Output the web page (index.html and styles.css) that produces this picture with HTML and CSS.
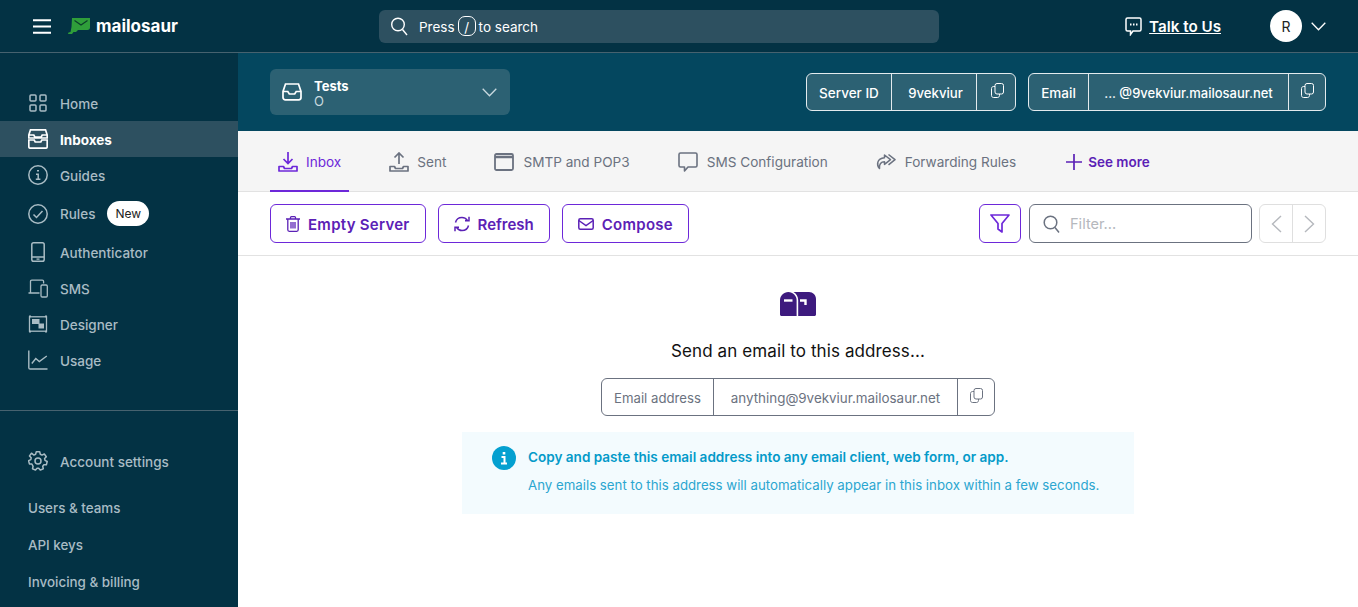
FILE: index.html
```html
<!DOCTYPE html>
<html lang="en">
<head>
  <meta charset="UTF-8">
  <title>Mailosaur</title>
  <link rel="stylesheet" href="styles.css">
</head>
<body>
  <header class="topbar">
    <svg class="burger" width="18" height="15" viewBox="0 0 18 15"><path d="M0 1.200h18M0 7.500h18M0 13.800h18" stroke="#fff" stroke-width="2" fill="none"/></svg>
    <div class="logo">
      <svg width="22" height="16" viewBox="0 0 22 16"><path d="M4 0h18v9.500c0 1.500-1 2.500-2.500 2.500H10L8 14H5.500L4 16H0l.5-1.500L2.500 14 3.500 9z" fill="#2f9e3a"/><path d="M6.500 2.500l6.500 4.500 6.500-4.500" stroke="#0b3f2a" stroke-width="1.200" fill="none"/></svg>
      <span class="logo-text">mailosaur</span>
    </div>
    <div class="search">
      <svg class="i" width="18" height="20" viewBox="0 0 18 20" fill="none" stroke="#fff" stroke-width="1.400"><circle cx="8" cy="8.500" r="6.300"/><path d="M12.500 13.500l4.500 5.500"/></svg>
      <span>Press</span><span class="kbd">/</span><span>to search</span>
    </div>
    <a class="talk">
      <svg width="17" height="19" viewBox="0 0 17 19" fill="none" stroke="#fff" stroke-width="1.500"><path d="M2.500 1h12c.8 0 1.500.7 1.500 1.500v10c0 .8-.7 1.500-1.500 1.500H8l-2.500 3.500V14h-3C1.700 14 1 13.300 1 12.500v-10C1 1.700 1.700 1 2.500 1z"/><path d="M5 7.500h1.500M8 7.500h1.500M11 7.500h1.500" stroke-width="1.800"/></svg>
      <span>Talk to Us</span>
    </a>
    <div class="avatar">R</div>
    <svg class="caret" width="15" height="9" viewBox="0 0 15 9" fill="none" stroke="#fff" stroke-width="1.300"><path d="M.7.800l6.800 7 6.800-7"/></svg>
  </header>

  <div class="layout">
    <aside class="sidebar">
      <nav class="nav">
        <a class="nav-item">
          <svg width="20" height="20" viewBox="0 0 20 20" fill="none" stroke="currentColor" stroke-width="1.500"><rect x="2" y="2" width="6" height="6" rx="1"/><rect x="12" y="2" width="6" height="6" rx="1"/><rect x="2" y="12" width="6" height="6" rx="1"/><rect x="12" y="12" width="6" height="6" rx="1"/></svg>
          Home
        </a>
        <a class="nav-item active">
          <svg width="20" height="20" viewBox="0 0 20 20" fill="none" stroke="currentColor" stroke-width="1.700"><path d="M2.500.8h15L19.200 6v3H.8V6zM.8 6h5l1 2h6.400l1-2h5"/><path d="M.8 11v6.500c0 1 .7 1.700 1.700 1.700h15c1 0 1.700-.7 1.700-1.700V11h-5.400l-1 2H7.200l-1-2z"/></svg>
          Inboxes
        </a>
        <a class="nav-item">
          <svg width="20" height="20" viewBox="0 0 20 20" fill="none" stroke="currentColor" stroke-width="1.500"><circle cx="10" cy="10" r="9.200"/><path d="M10 5v1.600" stroke-width="2"/><path d="M8 9.200h2.200v5M7.800 14.200h4.600" stroke-width="1.500"/></svg>
          Guides
        </a>
        <a class="nav-item rules">
          <svg width="20" height="20" viewBox="0 0 20 20" fill="none" stroke="currentColor" stroke-width="1.500"><circle cx="10" cy="10" r="9.200"/><path d="M5.500 10.500l3 3 6-6.500"/></svg>
          Rules
          <span class="badge">New</span>
        </a>
        <a class="nav-item">
          <svg width="20" height="20" viewBox="0 0 20 20" fill="none" stroke="currentColor" stroke-width="1.500"><rect x="3.800" y=".8" width="12.400" height="18.400" rx="1.800"/><path d="M3.800 15h12.400"/><path d="M8.500 17.100h3" stroke-width="1.300"/></svg>
          Authenticator
        </a>
        <a class="nav-item">
          <svg width="20" height="20" viewBox="0 0 20 20" fill="none" stroke="currentColor" stroke-width="1.300"><path d="M.5 15h11M2.500 15V3.500c0-.8.500-1.300 1.300-1.300h10.500c.8 0 1.300.5 1.300 1.300v2"/><rect x="13" y="7" width="6.300" height="12" rx="1.200"/></svg>
          SMS
        </a>
        <a class="nav-item">
          <svg width="20" height="20" viewBox="0 0 20 20" fill="none" stroke="currentColor" stroke-width="1.300"><rect x="1.500" y="2.800" width="17" height="14.400"/><path d="M1 2.300h2M17 2.300h2M1 17.700h2M17 17.700h2" stroke-width="1.800"/><rect x="4" y="5" width="7.500" height="5" fill="currentColor" stroke="none"/><rect x="10.500" y="9.500" width="5.500" height="5" fill="currentColor" stroke="none"/></svg>
          Designer
        </a>
        <a class="nav-item">
          <svg width="20" height="20" viewBox="0 0 20 20" fill="none" stroke="currentColor" stroke-width="1.400"><path d="M.8.500v17.200c0 .8.500 1.300 1.300 1.300h17.400"/><path d="M3.800 13.500l4-5 3.500 3 7.500-5.500"/></svg>
          Usage
        </a>
      </nav>
      <div class="divider"></div>
      <nav class="nav account">
        <a class="nav-item">
          <svg width="20" height="20" viewBox="0 0 20 20" fill="none" stroke="currentColor" stroke-width="1.500"><circle cx="10" cy="10" r="3"/><path d="M8.300.8h3.400l.6 2.500 1.700.8 2.300-1.100 2 2.700-1.700 1.900.4 1.800 2.200 1.100-.8 3.200-2.500.1-1.200 1.500.6 2.400-3 1.400-1.600-1.900h-1.600l-1.600 1.900-3-1.400.6-2.400L3.900 13l-2.500-.1-.8-3.200 2.200-1.100.4-1.800-1.700-1.900 2-2.700L5.900 4.100l1.700-.8z" stroke-linejoin="round"/></svg>
          Account settings
        </a>
        <a class="sub-item first">Users &amp; teams</a>
        <a class="sub-item">API keys</a>
        <a class="sub-item">Invoicing &amp; billing</a>
      </nav>
    </aside>

    <main class="main">
      <section class="server-bar">
        <div class="server-select">
          <svg width="20" height="18" viewBox="0 0 20 18" fill="none" stroke="#fff" stroke-width="1.700"><path d="M3.500 1h13L19 8.500V14.500c0 1.300-1 2.300-2.300 2.300H3.300C2 16.800 1 15.800 1 14.500V8.500zM1 8.500h4.800l1.500 2.500h5.400l1.500-2.500H19"/></svg>
          <div class="server-name">
            <strong>Tests</strong>
            <span>O</span>
          </div>
          <svg class="select-caret" width="15" height="9" viewBox="0 0 15 9" fill="none" stroke="#c9d9df" stroke-width="1.300"><path d="M.7.800l6.800 7 6.800-7"/></svg>
        </div>
        <div class="pill pill-server">
          <span class="seg seg-label">Server ID</span>
          <span class="seg seg-value">9vekviur</span>
          <span class="seg seg-copy"><svg width="13" height="15" viewBox="0 0 13 15" fill="none" stroke="#fff" stroke-width="1"><rect x="4" y=".5" width="8.500" height="10.500" rx="2"/><path d="M4 3.500H2.500c-1.100 0-2 .9-2 2v7c0 1.100.9 2 2 2h4c1.100 0 2-.9 2-2V11"/></svg></span>
        </div>
        <div class="pill pill-email">
          <span class="seg seg-label">Email</span>
          <span class="seg seg-value">... @9vekviur.mailosaur.net</span>
          <span class="seg seg-copy"><svg width="13" height="15" viewBox="0 0 13 15" fill="none" stroke="#fff" stroke-width="1"><rect x="4" y=".5" width="8.500" height="10.500" rx="2"/><path d="M4 3.500H2.500c-1.100 0-2 .9-2 2v7c0 1.100.9 2 2 2h4c1.100 0 2-.9 2-2V11"/></svg></span>
        </div>
      </section>

      <section class="tabs">
        <a class="tab active">
          <svg width="20" height="20" viewBox="0 0 20 20" fill="none" stroke="currentColor" stroke-width="1.700"><path d="M10 0v11M5.500 7l4.500 4.500L14.500 7"/><path d="M1 14.500h4.500l1 2h7l1-2H19v4.500H1z" stroke-linejoin="round"/></svg>
          Inbox
        </a>
        <a class="tab">
          <svg width="20" height="20" viewBox="0 0 20 20" fill="none" stroke="currentColor" stroke-width="1.700"><path d="M10 12V1M5.500 5.500L10 1l4.500 4.500"/><path d="M1 14.500h4.500l1 2h7l1-2H19v4.500H1z" stroke-linejoin="round"/></svg>
          Sent
        </a>
        <a class="tab">
          <svg width="20" height="18" viewBox="0 0 20 18" fill="none" stroke="currentColor" stroke-width="1.800"><rect x="1" y="1" width="18" height="16" rx="1.500"/><path d="M1 4h18" stroke-width="2.500"/></svg>
          SMTP and POP3
        </a>
        <a class="tab">
          <svg width="20" height="20" viewBox="0 0 20 20" fill="none" stroke="currentColor" stroke-width="1.600"><path d="M2.500 1h15c.8 0 1.500.7 1.500 1.500v11c0 .8-.7 1.500-1.500 1.500H10l-3.500 4v-4h-4C1.700 15 1 14.300 1 13.500v-11C1 1.700 1.700 1 2.500 1z" stroke-linejoin="round"/></svg>
          SMS Configuration
        </a>
        <a class="tab">
          <svg width="20" height="17" viewBox="0 0 20 17" fill="none" stroke="currentColor" stroke-width="1.500" stroke-linejoin="round"><path d="M8.500 2l6 4.700-6 4.700V8.800C5 8.800 3 11 3.500 15.500.5 12 .5 5.500 8.500 4.800z"/><path d="M12.500 1.500l6.500 5.200-6.500 5.200"/></svg>
          Forwarding Rules
        </a>
        <a class="tab more">
          <svg width="16" height="16" viewBox="0 0 16 16" fill="none" stroke="currentColor" stroke-width="1.700"><path d="M8 0v16M0 8h16"/></svg>
          See more
        </a>
      </section>

      <section class="toolbar">
        <button class="btn">
          <svg width="14" height="16" viewBox="0 0 14 16" fill="none" stroke="currentColor" stroke-width="1.300"><path d="M0 3h14M4.500 3V1.600c0-.5.400-.9.900-.9h3.200c.5 0 .9.400.9.900V3M1.800 3v10.800c0 .8.600 1.500 1.400 1.500h7.600c.8 0 1.400-.7 1.400-1.500V3M5 6v6.500M7 6v6.500M9 6v6.500"/></svg>
          Empty Server
        </button>
        <button class="btn btn-refresh">
          <svg width="16" height="16" viewBox="0 0 16 16" fill="none" stroke="currentColor" stroke-width="1.500"><path d="M1.500 6.500C2.200 3.500 4.800 1.500 8 1.500c2.200 0 4 1 5.300 2.800M15 .8v4h-4M14.500 9.500c-.7 3-3.300 5-6.500 5-2.200 0-4-1-5.300-2.800M1 15.200v-4h4"/></svg>
          Refresh
        </button>
        <button class="btn">
          <svg width="16" height="12" viewBox="0 0 16 12" fill="none" stroke="currentColor" stroke-width="1.500"><rect x=".8" y=".8" width="14.400" height="10.400" rx="1.500"/><path d="M.8 2.500L8 7.500l7.200-5"/></svg>
          Compose
        </button>
        <button class="btn-filter">
          <svg width="20" height="19" viewBox="0 0 20 19" fill="none" stroke="currentColor" stroke-width="1.700"><path d="M1 1h18l-7 8.500V18l-4-3V9.500z" stroke-linejoin="round"/></svg>
        </button>
        <div class="filter">
          <svg width="17" height="18" viewBox="0 0 17 18" fill="none" stroke="#6b7280" stroke-width="1.500"><circle cx="7.500" cy="7.500" r="6.300"/><path d="M12 12.500l4 5"/></svg>
          <span>Filter...</span>
        </div>
        <div class="pager">
          <span><svg width="11" height="18" viewBox="0 0 11 18" fill="none" stroke="#b5b8bd" stroke-width="1.400"><path d="M10 1L1.500 9l8.500 8"/></svg></span>
          <span><svg width="11" height="18" viewBox="0 0 11 18" fill="none" stroke="#b5b8bd" stroke-width="1.400"><path d="M1 1l8.500 8L1 17"/></svg></span>
        </div>
      </section>

      <section class="empty">
        <svg class="mailbox" width="36" height="24" viewBox="0 0 36 24"><path d="M8.300 0C3.700 0 0 3.700 0 8.300v14.200c0 .8.700 1.500 1.500 1.500h15.100V8.300C16.600 3.700 12.900 0 8.300 0z" fill="#3d1a7e"/><path d="M13.500 0c3 1.800 4.700 4.700 4.700 8.300V24h16.300c.8 0 1.500-.7 1.500-1.500V7c0-3.800-3.200-7-7-7z" fill="#3d1a7e"/><path d="M4 8.500h8.500" stroke="#fff" stroke-width="2.400"/><path d="M20 8.500h5.500V13" stroke="#fff" stroke-width="2.400" fill="none"/></svg>
        <h1 class="empty-title">Send an email to this address...</h1>
        <div class="address">
          <span class="addr-label">Email address</span>
          <span class="addr-value">anything@9vekviur.mailosaur.net</span>
          <span class="addr-copy"><svg width="13" height="15" viewBox="0 0 13 15" fill="none" stroke="#6b7280" stroke-width="1"><rect x="4" y=".5" width="8.500" height="10.500" rx="2"/><path d="M4 3.500H2.500c-1.100 0-2 .9-2 2v7c0 1.100.9 2 2 2h4c1.100 0 2-.9 2-2V11"/></svg></span>
        </div>
        <div class="info">
          <svg width="24" height="24" viewBox="0 0 24 24"><circle cx="12" cy="12" r="12" fill="#04a0d0"/><path d="M12 6v2.500" stroke="#fff" stroke-width="2.600"/><path d="M9.500 11h3v6.500M9 17.500h6" stroke="#fff" stroke-width="2" fill="none"/></svg>
          <div class="info-text">
            <strong>Copy and paste this email address into any email client, web form, or app.</strong>
            <p>Any emails sent to this address will automatically appear in this inbox within a few seconds.</p>
          </div>
        </div>
      </section>
    </main>
  </div>
</body>
</html>
```

FILE: styles.css
```css
* {
  box-sizing: border-box;
}
body {
  margin: 0;
  height: 607px;
  overflow: hidden;
  font-family: Inter, "Noto Sans", sans-serif;
  font-size: 14px;
  background-color: #fff;
  color: #111;
}
svg {
  flex: none;
  display: block;
}

/* top bar */
.topbar {
  height: 53px;
  display: flex;
  align-items: center;
  padding: 0 32px 0 33px;
  background-color: #033244;
  border-bottom: 1px solid #47626f;
  color: #fff;
}
.logo {
  display: flex;
  align-items: center;
  gap: 6px;
  margin-left: 17px;
  width: 311px;
}
.logo-text {
  font-size: 17px;
  font-weight: 700;
}
.search {
  width: 560px;
  height: 33px;
  display: flex;
  align-items: center;
  padding-left: 11px;
  border-radius: 6px;
  background-color: #2d5060;
  font-size: 13.5px;
}
.search .i {
  margin-right: 11px;
}
.search span {
  padding-top: 1px;
}
.kbd {
  width: 18px;
  height: 20px;
  margin: 0 3px;
  display: flex;
  align-items: center;
  justify-content: center;
  border: 1px solid #fff;
  border-radius: 7px;
}
.talk {
  margin-left: auto;
  display: flex;
  align-items: center;
  gap: 7px;
  font-size: 15.2px;
  font-weight: 600;
}
.talk span {
  text-decoration: underline;
}
.avatar {
  width: 32px;
  height: 32px;
  margin-left: 49px;
  display: flex;
  align-items: center;
  justify-content: center;
  border-radius: 50%;
  background-color: #fff;
  color: #222;
  font-size: 14px;
}
.caret {
  margin-left: 9px;
}

.layout {
  display: flex;
  height: 554px;
}

/* sidebar */
.sidebar {
  width: 238px;
  flex: none;
  padding-top: 32px;
  background-color: #033244;
  color: #a9bcc4;
}
.nav-item {
  height: 36px;
  display: flex;
  align-items: center;
  gap: 12px;
  padding: 1px 0 0 28px;
  font-size: 13.5px;
  font-weight: 500;
}
.nav-item svg {
  margin-top: -1px;
}
.nav-item.active {
  background-color: #2d5060;
  color: #fff;
  font-weight: 700;
}
.nav-item.rules {
  height: 41px;
}
.badge {
  padding: 0 8px;
  height: 25px;
  margin-top: -1px;
  display: flex;
  align-items: center;
  border-radius: 13px;
  background-color: #fff;
  color: #222;
  font-size: 12px;
  font-weight: 400;
}
.divider {
  height: 1px;
  margin-top: 32px;
  background-color: #47626f;
}
.account {
  padding-top: 32px;
}
.sub-item {
  height: 37px;
  display: flex;
  align-items: center;
  padding-left: 28px;
  font-size: 13.4px;
  font-weight: 500;
}
.sub-item.first {
  margin-top: 10px;
}

/* main */
.main {
  flex: 1;
  min-width: 0;
}
.server-bar {
  height: 78px;
  display: flex;
  align-items: center;
  padding: 0 32px;
  gap: 12px;
  background-color: #04475f;
}
.server-select {
  width: 240px;
  height: 46px;
  margin-right: auto;
  display: flex;
  align-items: center;
  gap: 12px;
  padding: 0 13px 0 12px;
  border-radius: 6px;
  background-color: #2c6173;
  color: #fff;
}
.server-name {
  flex: 1;
  padding-top: 4px;
  display: flex;
  flex-direction: column;
  font-size: 13px;
  line-height: 15px;
}
.server-name span {
  color: #c9d9df;
}
.pill {
  height: 38px;
  display: flex;
  border: 1px solid #e3ebee;
  border-radius: 6px;
  background-color: #2c6173;
  color: #fff;
  font-size: 13.5px;
  font-weight: 500;
}
.seg {
  display: flex;
  align-items: center;
  justify-content: center;
  padding-top: 1px;
  border-right: 1px solid #e3ebee;
}
.seg-copy {
  padding: 0 0 3px;
  border-right: 0;
}
.pill-server .seg-label { width: 85px; }
.pill-server .seg-value { width: 85px; font-size: 13.2px; padding-left: 3px; }
.pill-server .seg-copy { width: 38px; padding-left: 3px; }
.pill-email .seg-label { width: 60px; }
.pill-email .seg-value { width: 200px; font-size: 13px; }
.pill-email .seg-copy { width: 36px; }

.tabs {
  height: 61px;
  display: flex;
  padding-left: 32px;
  gap: 32px;
  background-color: #f5f5f5;
  border-bottom: 1px solid #e2e2e2;
  color: #6b7280;
}
.tab {
  display: flex;
  align-items: center;
  gap: 9px;
  padding: 1px 8px 0;
  font-size: 13.6px;
}
.tab:nth-child(-n+2) {
  gap: 8px;
}
.tab.active {
  color: #6d28d9;
  padding-top: 2px;
  border-bottom: 2px solid #6d28d9;
  margin-bottom: -1px;
}
.tab.more {
  margin-left: 2px;
  color: #5b21b6;
  font-size: 13.5px;
  font-weight: 600;
  gap: 6px;
}

.toolbar {
  height: 64px;
  display: flex;
  align-items: center;
  gap: 12px;
  padding: 0 32px;
  border-bottom: 1px solid #e2e2e2;
}
.btn {
  height: 39px;
  display: flex;
  align-items: center;
  gap: 8px;
  padding: 1px 15px 0;
  border: 1px solid #6d28d9;
  border-radius: 6px;
  background-color: #fff;
  color: #5b21b6;
  font-family: inherit;
  font-size: 15px;
  font-weight: 600;
  letter-spacing: .27px;
}
.btn-refresh {
  letter-spacing: 0;
}
.btn svg {
  margin-top: -1px;
}
.btn-filter {
  width: 42px;
  height: 39px;
  margin-left: auto;
  margin-right: -4px;
  display: flex;
  align-items: center;
  justify-content: center;
  padding: 0;
  border: 1px solid #6d28d9;
  border-radius: 6px;
  background-color: #fff;
  color: #6d28d9;
}
.filter {
  width: 223px;
  height: 39px;
  display: flex;
  align-items: center;
  gap: 10px;
  padding-left: 13px;
  border: 1px solid #6b7280;
  border-radius: 6px;
  color: #b5b8bd;
  font-size: 14.6px;
}
.filter span {
  padding-top: 1px;
}
.pager {
  width: 67px;
  height: 39px;
  margin-left: -5px;
  display: flex;
  border: 1px solid #dfdfdf;
  border-radius: 6px;
}
.pager span {
  flex: 1;
  display: flex;
  align-items: center;
  justify-content: center;
}
.pager span + span {
  border-left: 1px solid #dfdfdf;
}

/* empty state */
.empty {
  display: flex;
  flex-direction: column;
  align-items: center;
  padding-top: 36px;
}
.empty-title {
  margin: 24px 0 0;
  font-size: 17px;
  line-height: 22px;
  font-weight: 400;
  letter-spacing: .1px;
}
.address {
  width: 394px;
  height: 38px;
  margin-top: 16px;
  display: flex;
  border: 1px solid #6b7280;
  border-radius: 6px;
  color: #6b7280;
  font-size: 13.4px;
}
.address span {
  display: flex;
  align-items: center;
  justify-content: center;
  padding-top: 1px;
}
.address .addr-label {
  width: 112px;
  font-size: 13.2px;
  border-right: 1px solid #6b7280;
}
.addr-value {
  flex: 1;
  border-right: 1px solid #6b7280;
}
.address .addr-copy {
  width: 36px;
  padding: 0 0 3px;
}
.info {
  width: 672px;
  height: 82px;
  margin-top: 16px;
  display: flex;
  gap: 12px;
  padding: 14px 20px 14px 30px;
  background-color: #f3fbfe;
  color: #049ac9;
}
.info-text strong {
  display: block;
  font-size: 13.55px;
  font-weight: 600;
  line-height: 22px;
}
.info-text p {
  margin: 6px 0 0;
  color: #2ba6d0;
  font-size: 13.25px;
  line-height: 22px;
}
```
